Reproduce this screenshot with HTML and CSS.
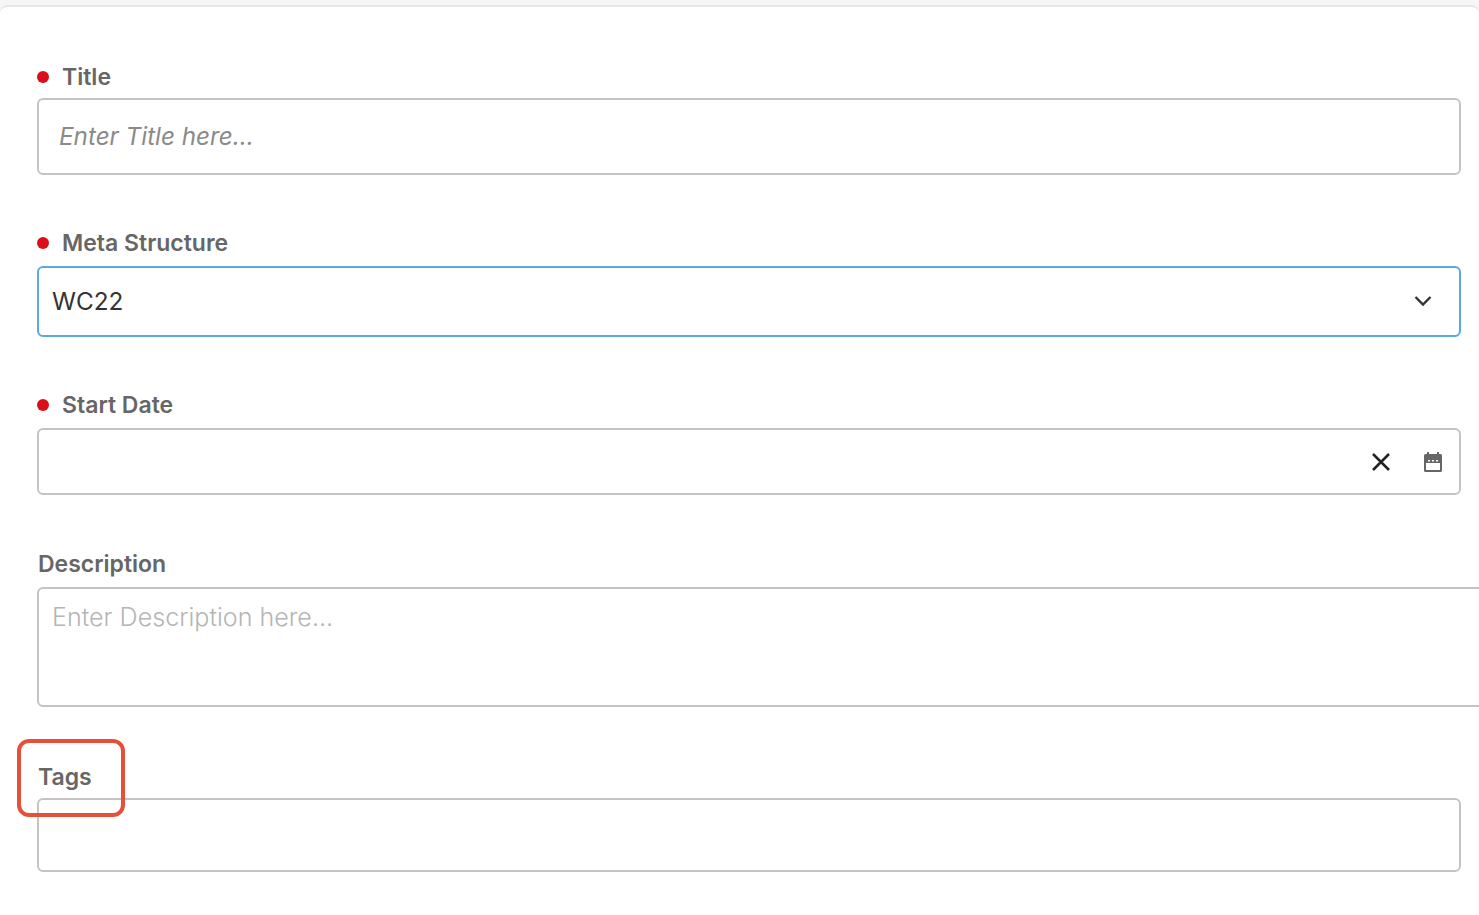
FILE: index.html
```html
<!DOCTYPE html>
<html lang="en">
<head>
    <meta charset="UTF-8">
    <meta name="viewport" content="width=device-width, initial-scale=1.0">
    <title>New Item</title>
    <link rel="stylesheet" href="styles.css">
</head>
<body>
    <div class="form-card">
        <div class="form-group group-title">
            <div class="field-label required">Title</div>
            <div class="field-box box-title"><span class="hint-italic">Enter Title here...</span></div>
        </div>

        <div class="form-group group-meta">
            <div class="field-label required">Meta Structure</div>
            <div class="field-box box-meta">
                <span class="field-value">WC22</span>
                <svg class="icon-chevron" width="24" height="24" viewBox="0 0 24 24" fill="none" stroke="#333" stroke-width="2.4">
                    <path d="M4.500 8l7.500 7.500L19.500 8"/>
                </svg>
            </div>
        </div>

        <div class="form-group group-date">
            <div class="field-label required">Start Date</div>
            <div class="field-box box-date">
                <svg class="icon-clear" width="22" height="22" viewBox="0 0 22 22" fill="none" stroke="#222" stroke-width="2.5">
                    <path d="M3 3l16 16M19 3L3 19"/>
                </svg>
                <svg class="icon-calendar" width="22" height="22" viewBox="0 0 22 22">
                    <path fill="#666" d="M5 1h2v2h8V1h2v2h1.500A1.500 1.500 0 0 1 20 4.500v15a1.500 1.500 0 0 1-1.500 1.500h-15A1.500 1.500 0 0 1 2 19.500v-15A1.500 1.500 0 0 1 3.500 3H5z"/>
                    <path fill="#fff" d="M4 12h14v7H4z"/>
                    <path fill="#fff" d="M6 9h2v1.500H6zM10 9h2v1.500h-2zM14 9h2v1.500h-2z"/>
                </svg>
            </div>
        </div>

        <div class="form-group group-description">
            <div class="field-label">Description</div>
            <div class="field-box box-description"><span class="hint-light">Enter Description here...</span></div>
        </div>

        <div class="form-group group-tags">
            <div class="field-label">Tags</div>
            <div class="field-box box-tags"></div>
        </div>

        <div class="callout"></div>
    </div>
</body>
</html>
```

FILE: styles.css
```css
html, body {
    height: 100%;
}

body {
    font-family: Inter, "Liberation Sans", sans-serif;
    background-color: #f6f6f6;
    margin: 0;
    padding-top: 5px;
    overflow: hidden;
    box-sizing: border-box;
}

.form-card {
    position: relative;
    height: 100%;
    box-sizing: border-box;
    background: #fff;
    border-top: 2px solid #e6e6e6;
    border-radius: 8px 8px 0 0;
    padding: 58px 18px 0 37px;
}

.form-group {
    margin-bottom: 56px;
}

.group-date {
    margin-bottom: 57px;
}

.group-description {
    margin-bottom: 58px;
}

.field-label {
    position: relative;
    font-size: 23px;
    font-weight: 600;
    line-height: 24px;
    color: #666;
    margin-bottom: 11px;
    padding-left: 1px;
}

.required {
    padding-left: 25px;
}

    .required::before {
        content: "";
        position: absolute;
        left: 0;
        top: 6px;
        width: 12px;
        height: 12px;
        border-radius: 50%;
        background: #d9101a;
    }

.group-title .field-label {
    margin-bottom: 9px;
}

.group-tags .field-label {
    margin-bottom: 9px;
}

.field-box {
    display: flex;
    align-items: center;
    box-sizing: border-box;
    border: 2px solid #c4c4c4;
    border-radius: 6px;
    background: #fff;
}

.box-title {
    height: 77px;
    padding-left: 20px;
}

.box-meta {
    height: 71px;
    padding: 0 24px 2px 13px;
    border-color: #5aa9e0;
    justify-content: space-between;
}

.box-date {
    height: 67px;
    padding-right: 15px;
    justify-content: flex-end;
    gap: 30px;
}

.box-description {
    height: 120px;
    margin-right: -40px;
    padding: 13px 13px;
    align-items: flex-start;
}

.box-tags {
    height: 74px;
}

.hint-italic {
    font-size: 24.25px;
    font-style: italic;
    color: #8a8a8a;
}

.hint-light {
    font-size: 25.1px;
    font-weight: 300;
    color: #b5b5b5;
}

.field-value {
    font-size: 24.3px;
    color: #333;
}

/* red marker over the Tags label */
.callout {
    position: absolute;
    left: 17px;
    top: 732px;
    width: 108px;
    height: 78px;
    box-sizing: border-box;
    border: 4px solid #e5503a;
    border-radius: 12px;
}
```
